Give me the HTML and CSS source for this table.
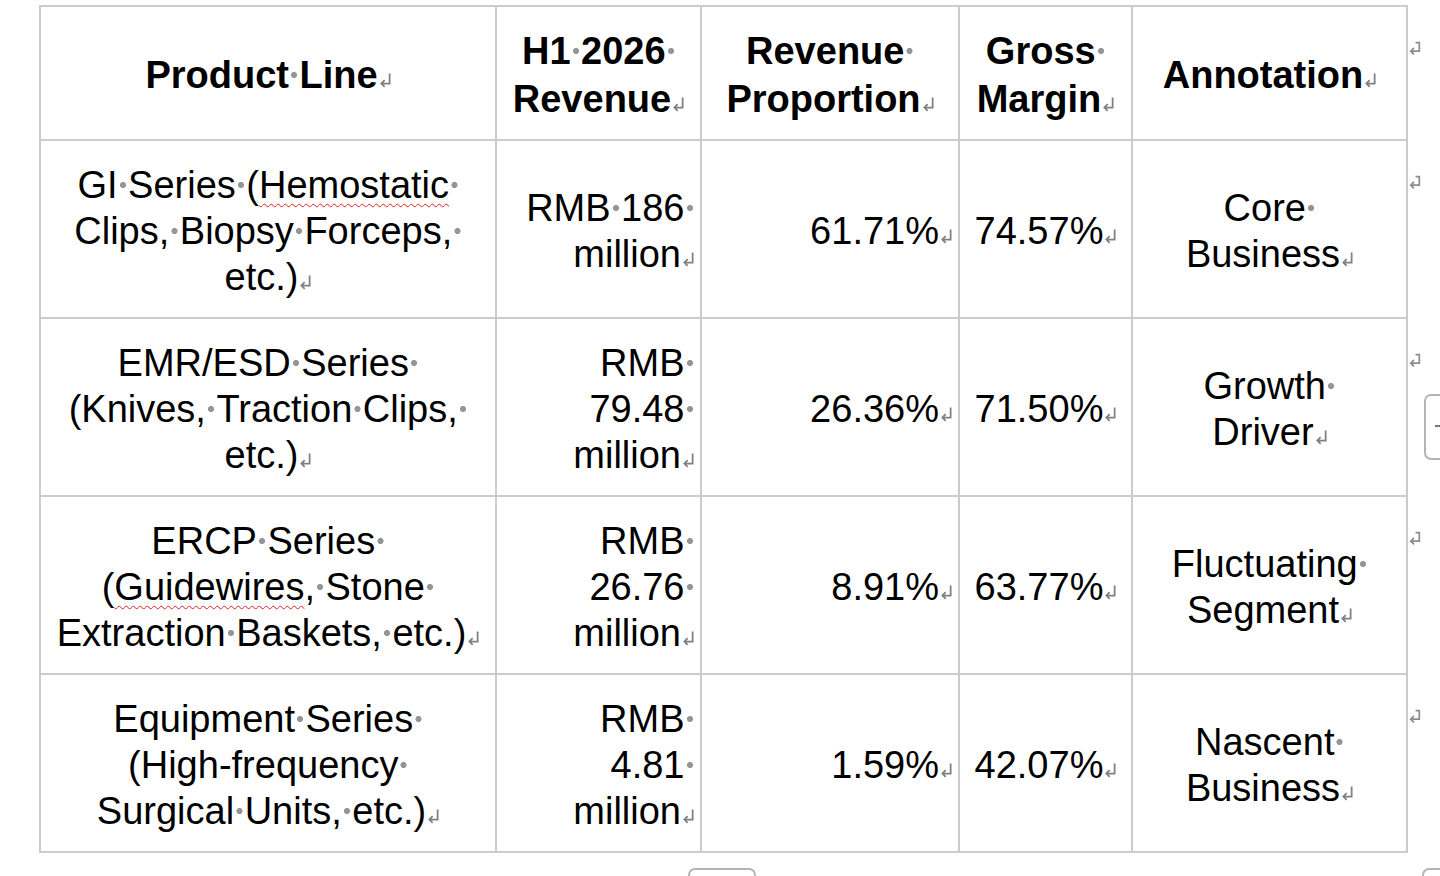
FILE: index.html
```html
<!DOCTYPE html>
<html lang="en">
<head>
<meta charset="utf-8">
<title>Product Line Table</title>
<link rel="stylesheet" href="styles.css">
</head>
<body>
<div class="page">
  <table class="t">
    <colgroup>
      <col class="c1"><col class="c2"><col class="c3"><col class="c4"><col class="c5"><col class="c6">
    </colgroup>
    <tr class="hd">
      <th>Product<i class="s">·</i>Line<svg class="r" viewBox="0 0 11 13"><path d="M9 1v8.5H2M4.8 6.7L2 9.5l2.8 2.8"/></svg></th>
      <th>H1<i class="s">·</i>2026<i class="s">·</i><br>Revenue<svg class="r" viewBox="0 0 11 13"><path d="M9 1v8.5H2M4.8 6.7L2 9.5l2.8 2.8"/></svg></th>
      <th>Revenue<i class="s">·</i><br>Proportion<svg class="r" viewBox="0 0 11 13"><path d="M9 1v8.5H2M4.8 6.7L2 9.5l2.8 2.8"/></svg></th>
      <th>Gross<i class="s">·</i><br>Margin<svg class="r" viewBox="0 0 11 13"><path d="M9 1v8.5H2M4.8 6.7L2 9.5l2.8 2.8"/></svg></th>
      <th>Annotation<svg class="r" viewBox="0 0 11 13"><path d="M9 1v8.5H2M4.8 6.7L2 9.5l2.8 2.8"/></svg></th>
      <td class="eor"><svg class="em" viewBox="0 0 12 14" width="13" height="15"><path d="M7 1.5h3.5v8H2.5M5.5 6.5l-3 3 3 3"/></svg></td>
    </tr>
    <tr>
      <td class="ctr">GI<i class="s">·</i>Series<i class="s">·</i>(<u class="sq">Hemostatic</u><i class="s">·</i><br>Clips,<i class="s">·</i>Biopsy<i class="s">·</i>Forceps,<i class="s">·</i><br>etc.)<svg class="r" viewBox="0 0 11 13"><path d="M9 1v8.5H2M4.8 6.7L2 9.5l2.8 2.8"/></svg></td>
      <td class="rt">RMB<i class="s">·</i>186<i class="s">·</i><br>million<svg class="r" viewBox="0 0 11 13"><path d="M9 1v8.5H2M4.8 6.7L2 9.5l2.8 2.8"/></svg></td>
      <td class="rt">61.71%<svg class="r" viewBox="0 0 11 13"><path d="M9 1v8.5H2M4.8 6.7L2 9.5l2.8 2.8"/></svg></td>
      <td class="ctr">74.57%<svg class="r" viewBox="0 0 11 13"><path d="M9 1v8.5H2M4.8 6.7L2 9.5l2.8 2.8"/></svg></td>
      <td class="ctr">Core<i class="s">·</i><br>Business<svg class="r" viewBox="0 0 11 13"><path d="M9 1v8.5H2M4.8 6.7L2 9.5l2.8 2.8"/></svg></td>
      <td class="eor"><svg class="em" viewBox="0 0 12 14" width="13" height="15"><path d="M7 1.5h3.5v8H2.5M5.5 6.5l-3 3 3 3"/></svg></td>
    </tr>
    <tr>
      <td class="ctr">EMR/ESD<i class="s">·</i>Series<i class="s">·</i><br>(Knives,<i class="s">·</i>Traction<i class="s">·</i>Clips,<i class="s">·</i><br>etc.)<svg class="r" viewBox="0 0 11 13"><path d="M9 1v8.5H2M4.8 6.7L2 9.5l2.8 2.8"/></svg></td>
      <td class="rt">RMB<i class="s">·</i><br>79.48<i class="s">·</i><br>million<svg class="r" viewBox="0 0 11 13"><path d="M9 1v8.5H2M4.8 6.7L2 9.5l2.8 2.8"/></svg></td>
      <td class="rt">26.36%<svg class="r" viewBox="0 0 11 13"><path d="M9 1v8.5H2M4.8 6.7L2 9.5l2.8 2.8"/></svg></td>
      <td class="ctr">71.50%<svg class="r" viewBox="0 0 11 13"><path d="M9 1v8.5H2M4.8 6.7L2 9.5l2.8 2.8"/></svg></td>
      <td class="ctr">Growth<i class="s">·</i><br>Driver<svg class="r" viewBox="0 0 11 13"><path d="M9 1v8.5H2M4.8 6.7L2 9.5l2.8 2.8"/></svg></td>
      <td class="eor"><svg class="em" viewBox="0 0 12 14" width="13" height="15"><path d="M7 1.5h3.5v8H2.5M5.5 6.5l-3 3 3 3"/></svg></td>
    </tr>
    <tr>
      <td class="ctr">ERCP<i class="s">·</i>Series<i class="s">·</i><br>(<u class="sq">Guidewires</u>,<i class="s">·</i>Stone<i class="s">·</i><br>Extraction<i class="s">·</i>Baskets,<i class="s">·</i>etc.)<svg class="r" viewBox="0 0 11 13"><path d="M9 1v8.5H2M4.8 6.7L2 9.5l2.8 2.8"/></svg></td>
      <td class="rt">RMB<i class="s">·</i><br>26.76<i class="s">·</i><br>million<svg class="r" viewBox="0 0 11 13"><path d="M9 1v8.5H2M4.8 6.7L2 9.5l2.8 2.8"/></svg></td>
      <td class="rt">8.91%<svg class="r" viewBox="0 0 11 13"><path d="M9 1v8.5H2M4.8 6.7L2 9.5l2.8 2.8"/></svg></td>
      <td class="ctr">63.77%<svg class="r" viewBox="0 0 11 13"><path d="M9 1v8.5H2M4.8 6.7L2 9.5l2.8 2.8"/></svg></td>
      <td class="ctr">Fluctuating<i class="s">·</i><br>Segment<svg class="r" viewBox="0 0 11 13"><path d="M9 1v8.5H2M4.8 6.7L2 9.5l2.8 2.8"/></svg></td>
      <td class="eor"><svg class="em" viewBox="0 0 12 14" width="13" height="15"><path d="M7 1.5h3.5v8H2.5M5.5 6.5l-3 3 3 3"/></svg></td>
    </tr>
    <tr>
      <td class="ctr">Equipment<i class="s">·</i>Series<i class="s">·</i><br>(High-frequency<i class="s">·</i><br>Surgical<i class="s">·</i>Units,<i class="s">·</i>etc.)<svg class="r" viewBox="0 0 11 13"><path d="M9 1v8.5H2M4.8 6.7L2 9.5l2.8 2.8"/></svg></td>
      <td class="rt">RMB<i class="s">·</i><br>4.81<i class="s">·</i><br>million<svg class="r" viewBox="0 0 11 13"><path d="M9 1v8.5H2M4.8 6.7L2 9.5l2.8 2.8"/></svg></td>
      <td class="rt">1.59%<svg class="r" viewBox="0 0 11 13"><path d="M9 1v8.5H2M4.8 6.7L2 9.5l2.8 2.8"/></svg></td>
      <td class="ctr">42.07%<svg class="r" viewBox="0 0 11 13"><path d="M9 1v8.5H2M4.8 6.7L2 9.5l2.8 2.8"/></svg></td>
      <td class="ctr">Nascent<i class="s">·</i><br>Business<svg class="r" viewBox="0 0 11 13"><path d="M9 1v8.5H2M4.8 6.7L2 9.5l2.8 2.8"/></svg></td>
      <td class="eor"><svg class="em" viewBox="0 0 12 14" width="13" height="15"><path d="M7 1.5h3.5v8H2.5M5.5 6.5l-3 3 3 3"/></svg></td>
    </tr>
  </table>
  <div class="handle handle-side"><span class="tick"></span></div>
  <div class="handle handle-bottom"></div>
  <div class="handle handle-corner"></div>
</div>
</body>
</html>
```

FILE: styles.css
```css
html, body {
  margin: 0;
  padding: 0;
  background: #ffffff;
}

body {
  font-family: "Liberation Sans", Arial, Helvetica, sans-serif;
  color: #000000;
  width: 1440px;
  height: 876px;
  overflow: hidden;
}

.page {
  position: relative;
  width: 1440px;
  height: 876px;
  box-sizing: border-box;
  padding: 5px 0 0 39px;
}

.t {
  border-collapse: collapse;
  table-layout: fixed;
  width: 1402px;
}

.c1 { width: 456px; }
.c2 { width: 205px; }
.c3 { width: 258px; }
.c4 { width: 173px; }
.c5 { width: 275px; }
.c6 { width: 35px; }

.t th,
.t td {
  border: 2px solid #cccccc;
  font-size: 38px;
  line-height: 46px;
  padding: 4px 5px 0 6px;
  vertical-align: middle;
  white-space: nowrap;
}

.t th {
  font-weight: bold;
  text-align: center;
  line-height: 48px;
}

.t tr { height: 178px; }
.t tr.hd { height: 134px; }

.ctr { text-align: center; }
.rt { text-align: right; }

.t td.eor {
  border: none;
  vertical-align: top;
  padding: 35px 0 0 0;
  line-height: 0;
}

.em {
  fill: none;
  stroke: #8c8c8c;
  stroke-width: 1.6;
}

.s {
  display: inline-block;
  width: 10.5px;
  height: 10px;
  vertical-align: 8px;
  font-style: normal;
  font-size: 10px;
  line-height: 10px;
  color: transparent;
  overflow: hidden;
  background: radial-gradient(circle at 50% 50%, #959595 0, #959595 2.7px, rgba(149,149,149,0) 3.4px);
}

.r {
  width: 13px;
  height: 16px;
  vertical-align: 0;
  margin-left: 1px;
  fill: none;
  stroke: #808080;
  stroke-width: 1.5;
}

.sq {
  text-decoration: underline wavy #e02020;
  text-decoration-thickness: 1px;
  text-underline-offset: 5px;
}

.handle {
  position: absolute;
  border: 2px solid #b4b4b4;
  border-radius: 7px;
  background: #ffffff;
  box-sizing: border-box;
}

.handle-side {
  left: 1424px;
  top: 394px;
  width: 40px;
  height: 66px;
}

.handle-side .tick {
  position: absolute;
  left: 9px;
  top: 29px;
  width: 6px;
  height: 2px;
  background: #777777;
}

.handle-bottom {
  left: 688px;
  top: 868px;
  width: 68px;
  height: 30px;
}

.handle-corner {
  left: 1422px;
  top: 868px;
  width: 40px;
  height: 30px;
}
```
